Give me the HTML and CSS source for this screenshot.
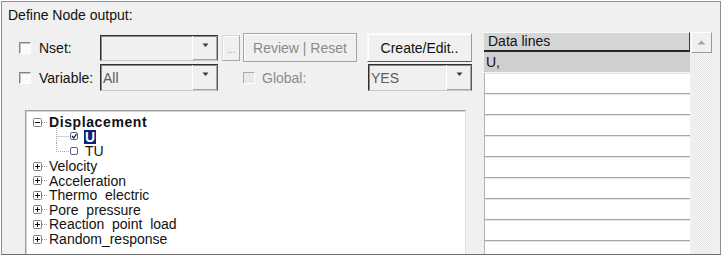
FILE: index.html
```html
<!DOCTYPE html>
<html>
<head>
<meta charset="utf-8">
<title>Define Node output</title>
<link rel="stylesheet" href="styles.css">
</head>
<body>
<div class="panel">
  <div class="title">Define Node output:</div>
  <div class="main">
    <div class="left">
      <div class="controls">
        <span class="check"></span>
        <span class="lbl">Nset:</span>
        <div class="combo">
          <span class="val"></span>
          <span class="drop"><svg width="7" height="5"><path d="M0.5 0.5H6.5L3.5 4Z" fill="#3a3a3a"/></svg></span>
        </div>
        <button class="btn dots">...</button>
        <button class="btn off">Review | Reset</button>
        <button class="btn main-btn">Create/Edit..</button>

        <span class="check"></span>
        <span class="lbl">Variable:</span>
        <div class="combo tall">
          <span class="val">All</span>
          <span class="drop"><svg width="7" height="5"><path d="M0.5 0.5H6.5L3.5 4Z" fill="#3a3a3a"/></svg></span>
        </div>
        <span></span>
        <div class="global"><span class="check off"></span><span>Global:</span></div>
        <div class="combo tall yes">
          <span class="val">YES</span>
          <span class="drop"><svg width="7" height="5"><path d="M0.5 0.5H6.5L3.5 4Z" fill="#3a3a3a"/></svg></span>
        </div>
      </div>

      <div class="tree">
        <div class="node">
          <svg class="exp" width="16" height="9"><rect x="0.5" y="0.5" width="8" height="8" rx="1" fill="#fff" stroke="#7d7d7d"/><path d="M2 4.5H7" stroke="#111"/><path d="M9 4.5H15" stroke="#a0a0a0" stroke-dasharray="1 1"/></svg>
          <b class="bold">Displacement</b>
        </div>
        <div class="node leaf">
          <svg width="36" height="15"><path d="M7.5 -1V15M7.5 7.5H20" stroke="#a8a8a8" stroke-dasharray="1 1"/><rect x="21.5" y="3.5" width="7" height="7" rx="1.5" fill="#fff" stroke="#52628a"/><path d="M23 7L24.8 9L27.5 5" fill="none" stroke="#111" stroke-width="1.2"/></svg>
          <span class="hl">U</span>
        </div>
        <div class="node leaf">
          <svg width="36" height="15"><path d="M7.5 -1V7.5H20" fill="none" stroke="#a8a8a8" stroke-dasharray="1 1"/><rect x="21.5" y="3.5" width="7" height="7" rx="1.5" fill="#fff" stroke="#52628a"/></svg>
          <span>TU</span>
        </div>
        <div class="node">
          <svg class="exp" width="16" height="9"><rect x="0.5" y="0.5" width="8" height="8" rx="1" fill="#fff" stroke="#7d7d7d"/><path d="M2 4.5H7M4.5 2V7" stroke="#111"/><path d="M9 4.5H15" stroke="#a0a0a0" stroke-dasharray="1 1"/></svg>
          <span>Velocity</span>
        </div>
        <div class="node">
          <svg class="exp" width="16" height="9"><rect x="0.5" y="0.5" width="8" height="8" rx="1" fill="#fff" stroke="#7d7d7d"/><path d="M2 4.5H7M4.5 2V7" stroke="#111"/><path d="M9 4.5H15" stroke="#a0a0a0" stroke-dasharray="1 1"/></svg>
          <span>Acceleration</span>
        </div>
        <div class="node">
          <svg class="exp" width="16" height="9"><rect x="0.5" y="0.5" width="8" height="8" rx="1" fill="#fff" stroke="#7d7d7d"/><path d="M2 4.5H7M4.5 2V7" stroke="#111"/><path d="M9 4.5H15" stroke="#a0a0a0" stroke-dasharray="1 1"/></svg>
          <span>Thermo&nbsp; electric</span>
        </div>
        <div class="node">
          <svg class="exp" width="16" height="9"><rect x="0.5" y="0.5" width="8" height="8" rx="1" fill="#fff" stroke="#7d7d7d"/><path d="M2 4.5H7M4.5 2V7" stroke="#111"/><path d="M9 4.5H15" stroke="#a0a0a0" stroke-dasharray="1 1"/></svg>
          <span>Pore&nbsp; pressure</span>
        </div>
        <div class="node">
          <svg class="exp" width="16" height="9"><rect x="0.5" y="0.5" width="8" height="8" rx="1" fill="#fff" stroke="#7d7d7d"/><path d="M2 4.5H7M4.5 2V7" stroke="#111"/><path d="M9 4.5H15" stroke="#a0a0a0" stroke-dasharray="1 1"/></svg>
          <span>Reaction&nbsp; point&nbsp; load</span>
        </div>
        <div class="node">
          <svg class="exp" width="16" height="9"><rect x="0.5" y="0.5" width="8" height="8" rx="1" fill="#fff" stroke="#7d7d7d"/><path d="M2 4.5H7M4.5 2V7" stroke="#111"/><path d="M9 4.5H15" stroke="#a0a0a0" stroke-dasharray="1 1"/></svg>
          <span>Random_response</span>
        </div>
      </div>
    </div>

    <div class="lines">
      <div class="th">Data lines</div>
      <div class="td sel">U,</div>
      <div class="td"></div>
      <div class="td"></div>
      <div class="td"></div>
      <div class="td"></div>
      <div class="td"></div>
      <div class="td"></div>
      <div class="td"></div>
      <div class="td"></div>
      <div class="td"></div>
    </div>

    <div class="vscroll">
      <div class="up"><svg width="9" height="5"><path d="M0.5 4.5H8.5L4.5 0.5Z" fill="#a4a4a4"/></svg></div>
      <div class="track"></div>
    </div>
  </div>
</div>
</body>
</html>
```

FILE: styles.css
```css
body {
    margin: 0;
    background: #fff;
    font: 14px "Liberation Sans", Arial, sans-serif;
    color: #111;
}

.panel {
    box-sizing: border-box;
    width: 720px;
    height: 254px;
    margin: 1px 0 0 1px;
    border: 1px solid #8e8e8e;
    border-bottom-color: #6e6e6e;
    background: #f0f0f0;
    overflow: hidden;
}

.title {
    box-sizing: border-box;
    height: 30px;
    padding: 5px 0 0 6px;
    line-height: 16px;
}

.main {
    display: flex;
    align-items: flex-start;
}

.left {
    flex: none;
    width: 482px;
}

/* top controls */
.controls {
    display: grid;
    grid-template-columns: 20px 61px 122px 21px 124px 105px;
    grid-template-rows: 29px 27px;
    row-gap: 2px;
    align-items: center;
    margin: 1px 0 0 17px;
}

.check {
    box-sizing: border-box;
    width: 12px;
    height: 12px;
    border: 1px solid;
    border-color: #858585 #fff #fff #858585;
    background: #fbfbfb;
    box-shadow: inset 1px 1px #c4c4c4;
}
.check.off {
    border-color: #a8a8a8 #fff #fff #a8a8a8;
    background: #e8e8e8;
    box-shadow: none;
}

.combo {
    box-sizing: border-box;
    display: flex;
    width: 118px;
    height: 26px;
    border: 1px solid;
    border-color: #303030 #555 #c8c8c8 #303030;
    box-shadow: inset 1px 1px #8a8a8a;
    background: #f0f0f0;
}
.combo.tall { height: 27px; }
.combo.yes { width: 104px; margin-left: 1px; }
.combo .val {
    flex: 1;
    padding-left: 2px;
    align-self: center;
    color: #5c5c5c;
}
.combo .drop {
    box-sizing: border-box;
    width: 25px;
    display: flex;
    justify-content: center;
    padding-top: 7px;
    border-left: 1px solid #fff;
    box-shadow: inset -1px -1px #a6a6a6;
}

.btn {
    box-sizing: border-box;
    height: 29px;
    padding: 0;
    font: inherit;
    color: #111;
    background: #f0f0f0;
    border: 1px solid #a4a4a4;
    box-shadow: inset 1px 1px #fff;
}
.btn.dots {
    width: 18px;
    height: 26px;
    padding-top: 4px;
    font-size: 10px;
    color: #a0a0a0;
    border-color: #d8d8d8 #a8a8a8 #a8a8a8 #d8d8d8;
}
.btn.off {
    width: 114px;
    color: #8a8a8a;
}
.btn.main-btn {
    width: 105px;
    border-color: #fafafa #9a9a9a #5a5a5a #fafafa;
}

.lbl { white-space: nowrap; }

.global {
    display: flex;
    align-items: center;
    gap: 7px;
    color: #8a8a8a;
}

/* tree */
.tree {
    box-sizing: border-box;
    width: 441px;
    height: 160px;
    margin: 19px 0 0 23px;
    padding: 4px 0 0 7px;
    background: #fff;
    border-top: 1px solid #9c9c9c;
    border-left: 1px solid #9c9c9c;
    border-right: 1px solid #e2e2e2;
    box-shadow: inset 1px 1px #d6d6d6;
}
.node {
    display: flex;
    align-items: center;
    height: 14.6px;
    white-space: nowrap;
}
.node .exp { flex: none; }
.node.leaf { padding-left: 16px; }
.node.leaf svg { flex: none; overflow: visible; }
.bold { letter-spacing: 0.6px; }
.hl {
    margin-left: -1px;
    padding: 0 1px;
    line-height: 14px;
    font-weight: bold;
    color: #fff;
    background: #0b2183;
}

/* data lines */
.lines {
    flex: none;
    width: 206px;
}
.th {
    box-sizing: border-box;
    height: 20px;
    padding-left: 4px;
    line-height: 17px;
    background: #d5d5d5;
    border-top: 1px solid #fafafa;
    border-bottom: 2px solid #262626;
    border-right: 1px solid #3a3a3a;
}
.td {
    box-sizing: border-box;
    height: 21px;
    background: #fff;
    border-left: 1px solid #b4b4b4;
    border-bottom: 1px solid #a6a6a6;
    box-shadow: inset 0 1px #e6e6e6;
}
.td.sel {
    padding-left: 2px;
    line-height: 20px;
    background: #cfcfcf;
    border-left: none;
    border-bottom-color: #f4f4f4;
    box-shadow: none;
}

.vscroll {
    flex: none;
    width: 21px;
    margin-left: 1px;
}
.up {
    box-sizing: border-box;
    height: 21px;
    display: flex;
    align-items: center;
    justify-content: center;
    background: #f0f0f0;
    border: 1px solid;
    border-color: #fff #9a9a9a #9a9a9a #fff;
}
.track {
    height: 220px;
    background: repeating-conic-gradient(#f7f7f7 0 25%, #e6e6e6 0 50%) 0 0 / 2px 2px;
}
```
